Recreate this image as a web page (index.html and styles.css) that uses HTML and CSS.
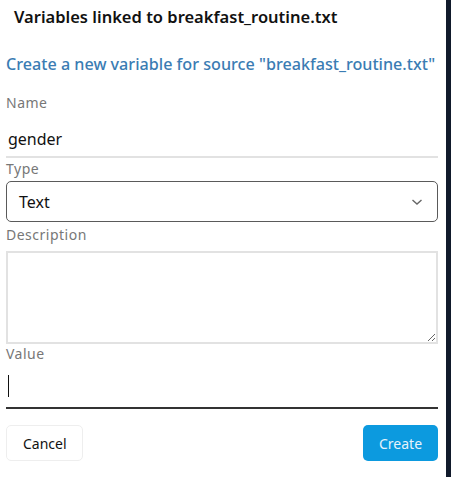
FILE: index.html
```html
<!DOCTYPE html>
<html lang="en">

<head>
  <meta charset="UTF-8" />
  <meta name="viewport" content="width=device-width, initial-scale=1.0" />
  <title>Variables</title>
  <link rel="stylesheet" href="styles.css">
</head>

<body>
  <div class="panel">
    <h3 class="panel-title">Variables linked to breakfast_routine.txt</h3>

    <form class="var-form">
      <h4 class="form-title">Create a new variable for source "breakfast_routine.txt"</h4>

      <label class="field-label label-name" for="name">Name</label>
      <input id="name" class="line-input name-input" type="text" value="gender" />

      <label class="field-label label-type" for="type">Type</label>
      <div class="select-box">
        <span>Text</span>
        <svg width="12" height="8" viewBox="0 0 12 8">
          <path d="M1.5 2 L6 6 L10.5 2" fill="none" stroke="#666" stroke-width="1.4" />
        </svg>
      </div>

      <label class="field-label" for="desc">Description</label>
      <textarea id="desc" class="desc-box"></textarea>

      <label class="field-label" for="value">Value</label>
      <div class="line-input value-input"><span class="caret"></span></div>

      <div class="actions">
        <button type="button" class="btn btn-cancel">Cancel</button>
        <button type="button" class="btn btn-create">Create</button>
      </div>
    </form>
  </div>
  <div class="side-strip"></div>
</body>

</html>
```

FILE: styles.css
```css
* {
  margin: 0;
  padding: 0;
  box-sizing: border-box;
}

body {
  height: 100vh;
  background: #ffffff;
  font-family: 'Noto Sans', 'Open Sans', sans-serif;
  color: #111111;
  display: flex;
  overflow: hidden;
}

.panel {
  flex: 1;
  padding: 0 8px 0 6px;
}

.side-strip {
  width: 5px;
  background: #111a2b;
}

.panel-title {
  font-size: 16.5px;
  font-weight: 600;
  line-height: 22px;
  padding: 6px 0 0 8px;
  color: #111111;
}

.var-form {
  display: flex;
  flex-direction: column;
}

.form-title {
  margin-top: 25px;
  font-size: 16.15px;
  font-weight: 500;
  line-height: 22px;
  color: #3a7cb3;
  white-space: nowrap;
}

.field-label {
  font-size: 14px;
  line-height: 18px;
  color: #777777;
  letter-spacing: 0.5px;
}

.label-name {
  margin-top: 19px;
}

.label-type {
  margin-top: 2px;
}

.line-input {
  border: none;
  border-bottom: 2px solid #e2e2e2;
  font-family: inherit;
  font-size: 16px;
  color: #111111;
  padding: 0 2px;
  outline: none;
  background: transparent;
}

.name-input {
  height: 46px;
  padding-top: 9px;
}

.select-box {
  margin-top: 3px;
  height: 41px;
  border: 1px solid #5a5a5a;
  border-radius: 5px;
  display: flex;
  align-items: center;
  justify-content: space-between;
  padding: 0 14px 0 12px;
  font-size: 16px;
  margin-bottom: 4px;
}

.desc-box {
  margin-top: 7px;
  height: 93px;
  border: 2px solid #e2e2e2;
  resize: vertical;
  font-family: inherit;
  outline: none;
  margin-bottom: 1px;
}

.value-input {
  height: 46px;
  border-bottom-color: #333333;
  display: flex;
  align-items: center;
  padding-top: 2px;
}

.caret {
  width: 1px;
  height: 22px;
  background: #111111;
}

.actions {
  display: flex;
  justify-content: space-between;
  margin-top: 16px;
}

.btn {
  height: 36px;
  border-radius: 5px;
  font-family: inherit;
  font-size: 14px;
  padding: 0 16px;
  cursor: pointer;
}

.btn-cancel {
  background: #ffffff;
  border: 1px solid #eeeeee;
  color: #111111;
  width: 77px;
}

.btn-create {
  background: #0c9adf;
  border: none;
  color: #e6f3fb;
  width: 75px;
}
```
